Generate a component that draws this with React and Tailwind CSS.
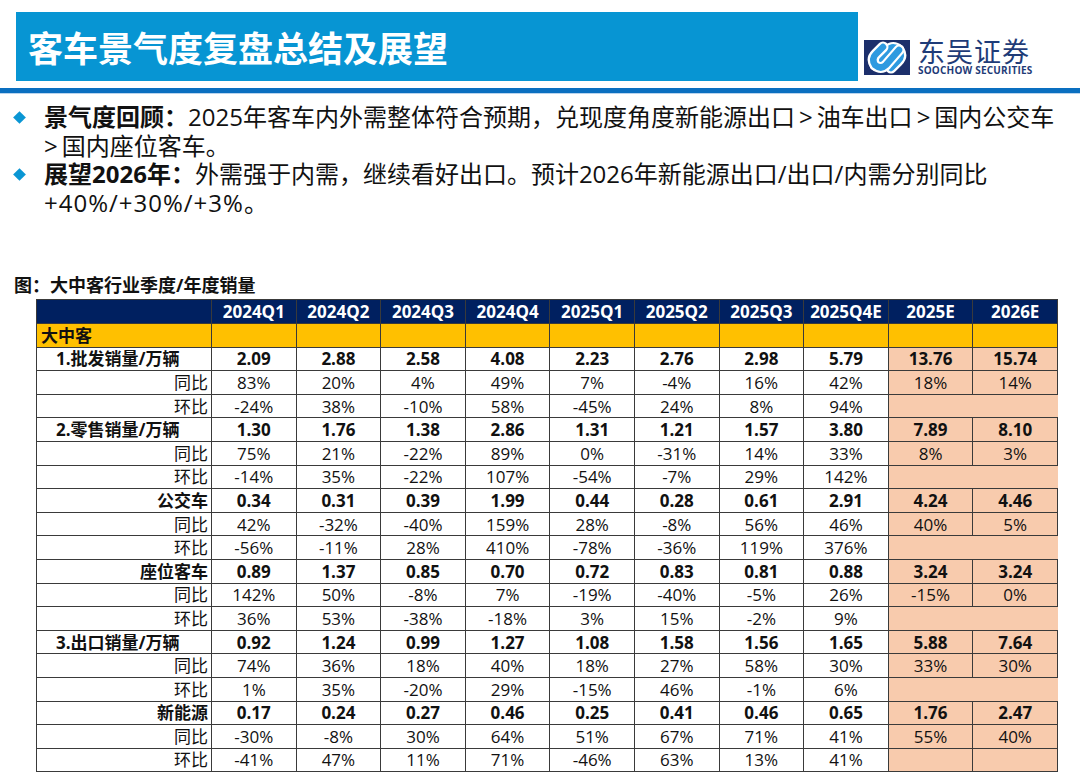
import React from "react";

const cols = ["2024Q1", "2024Q2", "2024Q3", "2024Q4", "2025Q1", "2025Q2", "2025Q3", "2025Q4E", "2025E", "2026E"];

// kind: main = indented bold, sub = right aligned bold, ratio = right aligned normal
const rows = [
  { label: "1.批发销量/万辆", kind: "main", v: ["2.09", "2.88", "2.58", "4.08", "2.23", "2.76", "2.98", "5.79", "13.76", "15.74"] },
  { label: "同比", kind: "ratio", v: ["83%", "20%", "4%", "49%", "7%", "-4%", "16%", "42%", "18%", "14%"] },
  { label: "环比", kind: "ratio", v: ["-24%", "38%", "-10%", "58%", "-45%", "24%", "8%", "94%", "", ""] },
  { label: "2.零售销量/万辆", kind: "main", v: ["1.30", "1.76", "1.38", "2.86", "1.31", "1.21", "1.57", "3.80", "7.89", "8.10"] },
  { label: "同比", kind: "ratio", v: ["75%", "21%", "-22%", "89%", "0%", "-31%", "14%", "33%", "8%", "3%"] },
  { label: "环比", kind: "ratio", v: ["-14%", "35%", "-22%", "107%", "-54%", "-7%", "29%", "142%", "", ""] },
  { label: "公交车", kind: "sub", v: ["0.34", "0.31", "0.39", "1.99", "0.44", "0.28", "0.61", "2.91", "4.24", "4.46"] },
  { label: "同比", kind: "ratio", v: ["42%", "-32%", "-40%", "159%", "28%", "-8%", "56%", "46%", "40%", "5%"] },
  { label: "环比", kind: "ratio", v: ["-56%", "-11%", "28%", "410%", "-78%", "-36%", "119%", "376%", "", ""] },
  { label: "座位客车", kind: "sub", v: ["0.89", "1.37", "0.85", "0.70", "0.72", "0.83", "0.81", "0.88", "3.24", "3.24"] },
  { label: "同比", kind: "ratio", v: ["142%", "50%", "-8%", "7%", "-19%", "-40%", "-5%", "26%", "-15%", "0%"] },
  { label: "环比", kind: "ratio", v: ["36%", "53%", "-38%", "-18%", "3%", "15%", "-2%", "9%", "", ""] },
  { label: "3.出口销量/万辆", kind: "main", v: ["0.92", "1.24", "0.99", "1.27", "1.08", "1.58", "1.56", "1.65", "5.88", "7.64"] },
  { label: "同比", kind: "ratio", v: ["74%", "36%", "18%", "40%", "18%", "27%", "58%", "30%", "33%", "30%"] },
  { label: "环比", kind: "ratio", v: ["1%", "35%", "-20%", "29%", "-15%", "46%", "-1%", "6%", "", ""] },
  { label: "新能源", kind: "sub", v: ["0.17", "0.24", "0.27", "0.46", "0.25", "0.41", "0.46", "0.65", "1.76", "2.47"] },
  { label: "同比", kind: "ratio", v: ["-30%", "-8%", "30%", "64%", "51%", "67%", "71%", "41%", "55%", "40%"] },
  { label: "环比", kind: "ratio", v: ["-41%", "47%", "11%", "71%", "-46%", "63%", "13%", "41%", "", ""] },
];

function Logo() {
  return (
    <div className="flex items-start">
      <svg width="46" height="35" viewBox="0 0 46 35" className="mt-[3px]">
        <rect width="46" height="35" fill="#1c2f6b" />
        <path d="M11 25 L24 10 Q29 5 35 10 Q39 16 34 21 L27 28" fill="none" stroke="#fff" strokeWidth="11" strokeLinecap="round" />
        <path d="M11 25 L24 10 Q29 5 35 10 Q39 16 34 21 L27 28" fill="none" stroke="#2e9ae0" strokeWidth="6.5" strokeLinecap="round" />
        <path d="M35 10 L22 25 Q17 30 11 25 Q7 19 12 14 L19 7" fill="none" stroke="#fff" strokeWidth="11" strokeLinecap="round" />
        <path d="M35 10 L22 25 Q17 30 11 25 Q7 19 12 14 L19 7" fill="none" stroke="#2e9ae0" strokeWidth="6.5" strokeLinecap="round" />
      </svg>
      <div className="ml-[8px] flex flex-col">
        <span className="text-[27px] leading-[28px] text-[#1f3c78] tracking-[1px] font-['Noto_Sans_CJK_SC',sans-serif]">东吴证券</span>
        <span className="text-[10px] leading-[11px] font-bold text-[#1f3c78] tracking-[0.2px] font-['Open_Sans',sans-serif]">SOOCHOW SECURITIES</span>
      </div>
    </div>
  );
}

function Bullet({ children }) {
  return (
    <div className="flex">
      <div className="w-[44px] h-[28.5px] flex items-center pl-[15px] shrink-0">
        <div className="w-[9px] h-[9px] bg-[#0a96d4] rotate-45" />
      </div>
      <div className="leading-[28.5px]">{children}</div>
    </div>
  );
}

const Gt = () => <span className="mx-[4px]">&gt;</span>;

export default function App() {
  const cell = "border border-[#3a3a3a] p-0";
  return (
    <div className="w-[1080px] h-[777px] bg-white overflow-hidden text-[#111] font-['Open_Sans','Noto_Sans_CJK_SC',sans-serif]">
      <div className="flex items-start pt-[12px]">
        <div className="ml-[16px] w-[842px] h-[69px] bg-[#0795d3] flex items-center pl-[12px]">
          <h1 className="text-white text-[35px] font-bold font-['Noto_Sans_CJK_SC',sans-serif] leading-none">
            客车景气度复盘总结及展望
          </h1>
        </div>
        <div className="ml-[6px] mt-[25px]">
          <Logo />
        </div>
      </div>
      <div className="mt-[7px] h-[5px] bg-[#0a6fc0]" />
      <div className="h-[1px] bg-[#b9d4ee]" />

      <div className="mt-[9px] text-[24px]">
        <Bullet>
          <span className="font-bold">景气度回顾：</span>
          2025年客车内外需整体符合预期，兑现度角度新能源出口<Gt />油车出口<Gt />国内公交车
          <br />
          <span className="mr-[4px]">&gt;</span>国内座位客车。
        </Bullet>
        <Bullet>
          <span className="font-bold">展望2026年：</span>
          外需强于内需，继续看好出口。预计2026年新能源出口/出口/内需分别同比
          <br />
          <span className="tracking-[1px]">+40%/+30%/+3%</span>。
        </Bullet>
      </div>

      <div className="mt-[56px] pl-[14px] text-[18px] leading-[24px] font-bold">图：大中客行业季度/年度销量</div>

      <table className="ml-[36px] mt-[2px] w-[1022px] border-collapse table-fixed text-[17px] leading-none">
        <colgroup>
          <col className="w-[175px]" />
          {cols.map((c) => (
            <col key={c} />
          ))}
        </colgroup>
        <thead>
          <tr className="h-[24px] bg-[#002060] text-white font-bold">
            <th className={cell}></th>
            {cols.map((c) => (
              <th key={c} className={`${cell} text-center font-bold`}>
                {c}
              </th>
            ))}
          </tr>
        </thead>
        <tbody>
          <tr className="h-[23.6px] bg-[#ffc000]">
            <td className={`${cell} pl-[4px] font-bold`}>大中客</td>
            {cols.map((c) => (
              <td key={c} className={cell}></td>
            ))}
          </tr>
          {rows.map((r, i) => {
            const bold = r.kind !== "ratio";
            // the 环比 rows leave the estimate cells open on the right
            const open = r.label === "环比" && i !== rows.length - 1;
            return (
              <tr key={i} className="h-[23.6px]">
                <td
                  className={`${cell} ${bold ? "font-bold" : ""} ${
                    r.kind === "main" ? "pl-[19px] text-left" : "pr-[3px] text-right"
                  }`}
                >
                  {r.label}
                </td>
                {r.v.map((v, j) => {
                  const est = j >= 8;
                  return (
                    <td
                      key={j}
                      className={`${cell} text-center ${bold ? "font-bold" : ""} ${est ? "bg-[#f8cbad]" : ""} ${
                        est && open ? "border-r-[#f8cbad]" : ""
                      }`}
                    >
                      {v}
                    </td>
                  );
                })}
              </tr>
            );
          })}
        </tbody>
      </table>
    </div>
  );
}
